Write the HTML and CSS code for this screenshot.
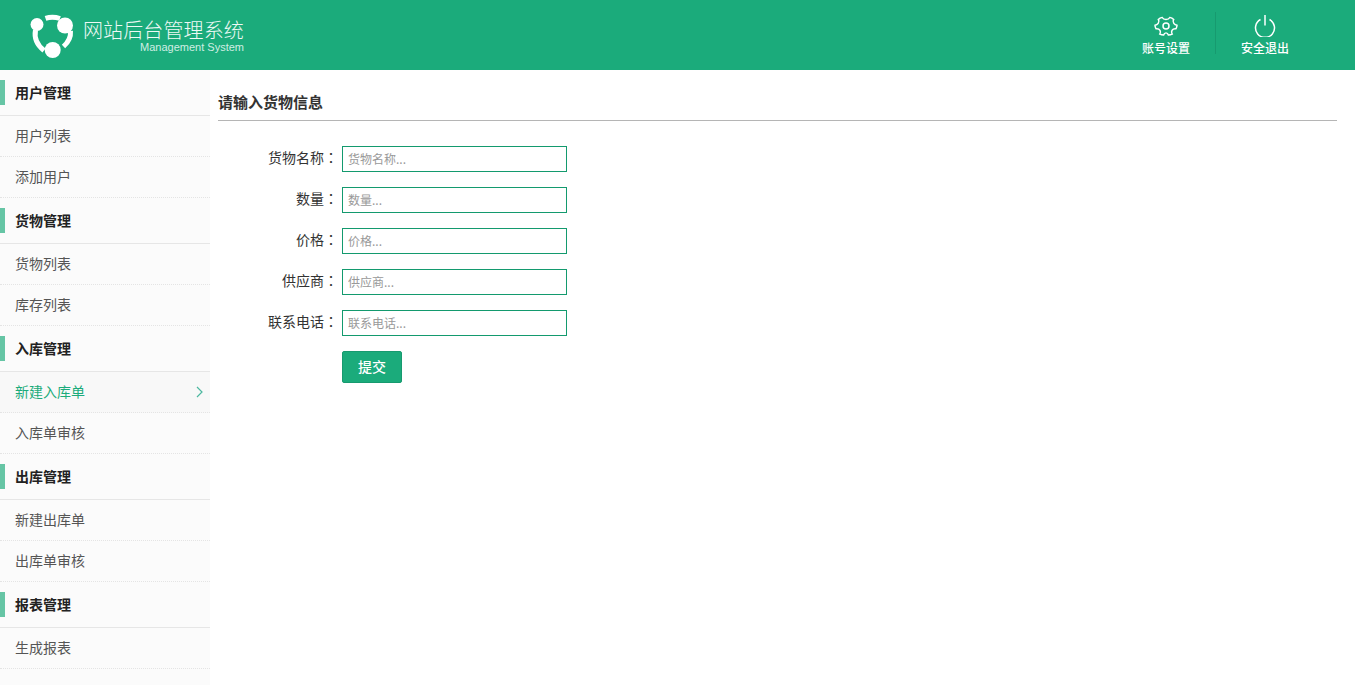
FILE: index.html
```html
<!DOCTYPE html>
<html lang="zh-CN">
<head>
<meta charset="utf-8">
<title>网站后台管理系统</title>
<link rel="stylesheet" href="styles.css">
</head>
<body>
<header class="topbar">
  <div class="brand">
    <svg class="brand-logo" width="46" height="46" viewBox="0 0 46 46">
      <g fill="none" stroke="#fff" stroke-width="5">
        <path d="M16.500 6.300C21 4.800 26 4.800 31 6.500"/>
        <path d="M6.500 18C5 26 8 33 15 38.500"/>
        <path d="M41.500 19C42 25 39 30.500 34.500 34.500"/>
      </g>
      <g fill="#fff">
        <circle cx="8" cy="12.500" r="6.500"/>
        <circle cx="36" cy="13.500" r="8"/>
        <circle cx="23.700" cy="38" r="8"/>
      </g>
    </svg>
    <div class="brand-text">
      <div class="brand-title">网站后台管理系统</div>
      <div class="brand-sub">Management System</div>
    </div>
  </div>
  <nav class="top-actions">
    <a class="action action-settings">
      <svg width="24" height="22" viewBox="0 0 24 22" fill="none" stroke="#fff" stroke-width="1.500">
        <g transform="translate(0 1.100) scale(1 .9)">
          <path d="M8.200 1.500C9 3.200 10.300 3.800 12 3.800S15 3.200 15.800 1.500C17.300 1.800 18.700 2.600 19.700 3.700C18.800 5.200 18.900 6.700 19.800 8S21.600 9.900 23 10.200C23 11.500 22.600 13 21.900 14.100C20.200 13.900 18.800 14.500 18 15.900C17.300 17.300 17.300 18.600 18.200 20C17 20.700 15.300 21 14.400 21C14 19.600 13.200 18.600 12 18.600S10 19.600 9.600 21C8.200 21 6.900 20.600 5.800 20C6.700 18.600 6.700 17.300 6 15.900C5.200 14.500 3.800 13.900 2.100 14.100C1.400 13 1 11.500 1 10.200C2.400 9.900 3.300 9.300 4.200 8S5.200 5.200 4.300 3.700C5.300 2.600 6.700 1.800 8.200 1.500Z"/>
        </g>
        <circle cx="12" cy="11" r="3"/>
      </svg>
      <span>账号设置</span>
    </a>
    <a class="action action-divided">
      <svg width="24" height="22" viewBox="0 0 24 22" fill="none" stroke="#fff" stroke-width="1.500">
        <path d="M7.500 4.500A9.500 9.500 0 1 0 16.500 4.500"/>
        <path d="M12 0V10.500"/>
      </svg>
      <span>安全退出</span>
    </a>
  </nav>
</header>
<div class="layout">
  <aside class="sidebar">
    <section>
      <h3 class="menu-head"><i class="marker"></i>用户管理</h3>
      <a class="menu-item">用户列表</a>
      <a class="menu-item">添加用户</a>
    </section>
    <section>
      <h3 class="menu-head"><i class="marker"></i>货物管理</h3>
      <a class="menu-item">货物列表</a>
      <a class="menu-item">库存列表</a>
    </section>
    <section>
      <h3 class="menu-head"><i class="marker"></i>入库管理</h3>
      <a class="menu-item active">新建入库单
        <svg class="chevron" width="7" height="12" viewBox="0 0 7 12" fill="none" stroke="#4cb8a0" stroke-width="1.200"><path d="M1 1L6 6L1 11"/></svg>
      </a>
      <a class="menu-item">入库单审核</a>
    </section>
    <section>
      <h3 class="menu-head"><i class="marker"></i>出库管理</h3>
      <a class="menu-item">新建出库单</a>
      <a class="menu-item">出库单审核</a>
    </section>
    <section>
      <h3 class="menu-head"><i class="marker"></i>报表管理</h3>
      <a class="menu-item">生成报表</a>
    </section>
  </aside>
  <main class="content">
    <h2 class="page-title">请输入货物信息</h2>
    <form class="entry-form">
      <label class="field"><span class="field-label">货物名称<span class="colon" lang="zh-TW">：</span></span><input class="field-input" placeholder="货物名称..."></label>
      <label class="field"><span class="field-label">数量<span class="colon" lang="zh-TW">：</span></span><input class="field-input" placeholder="数量..."></label>
      <label class="field"><span class="field-label">价格<span class="colon" lang="zh-TW">：</span></span><input class="field-input" placeholder="价格..."></label>
      <label class="field"><span class="field-label">供应商<span class="colon" lang="zh-TW">：</span></span><input class="field-input" placeholder="供应商..."></label>
      <label class="field"><span class="field-label">联系电话<span class="colon" lang="zh-TW">：</span></span><input class="field-input" placeholder="联系电话..."></label>
      <button class="submit" type="button">提交</button>
    </form>
  </main>
</div>
</body>
</html>
```

FILE: styles.css
```css
* { box-sizing: border-box; }
html, body { height: 100%; }
body {
  margin: 0;
  display: flex;
  flex-direction: column;
  overflow: hidden;
  background: #fff;
  color: #333;
  font: 14px/20px "Noto Sans CJK SC", "Liberation Sans", sans-serif;
}
.topbar {
  flex: none;
  height: 70px;
  display: flex;
  justify-content: space-between;
  background: #1bab7b;
  color: #fff;
}
.brand {
  display: flex;
  align-items: center;
  padding-left: 29px;
  gap: 8px;
}
.brand-logo { margin-top: -1px; overflow: visible; }
.brand-text { display: flex; flex-direction: column; }
.brand-title {
  padding-top: 5px;
  font-family: "Liberation Sans", "Noto Sans CJK SC", sans-serif;
  font-size: 20px;
  line-height: 19px;
  font-weight: 300;
  letter-spacing: .12px;
  color: #eef9f5;
}
.brand-sub {
  font-family: "Liberation Sans", sans-serif;
  font-size: 11px;
  line-height: 12px;
  text-align: right;
  color: #cfeee3;
}
.top-actions {
  display: flex;
  align-items: center;
  padding-right: 40px;
}
.action {
  width: 100px;
  height: 42px;
  margin-top: -4px;
  padding-top: 3px;
  display: flex;
  flex-direction: column;
  align-items: center;
  gap: 2px;
  font-size: 12px;
  line-height: 18px;
  font-weight: 500;
}
.action svg { flex: none; }
.action span { flex: none; }
.action-settings { padding-left: 2px; }
.action-divided {
  padding-right: 1px;
  border-left: 1px solid #179a6f;
}
.layout {
  flex: 1;
  display: flex;
  min-height: 0;
}
.sidebar {
  flex: none;
  width: 210px;
  background: #fbfbfb;
}
.menu-head {
  height: 46px;
  margin: 0;
  padding: 10px 0 0 0;
  display: flex;
  align-items: flex-start;
  font-size: 14px;
  line-height: 25px;
  font-weight: 700;
  color: #222;
  border-bottom: 1px solid #e6e6e6;
}
.marker {
  width: 5px;
  height: 25px;
  margin-right: 10px;
  background: #66c5a5;
}
.menu-item {
  position: relative;
  display: block;
  height: 41px;
  padding: 9px 0 0 15px;
  font-size: 14px;
  color: #555;
  border-bottom: 1px dotted #e4e4e4;
}
.menu-item.active {
  background: #f8f8f8;
  color: #1bab7b;
}
.chevron {
  position: absolute;
  right: 7px;
  top: 14px;
}
.content {
  flex: 1;
  padding: 20px 18px 0 8px;
}
.page-title {
  height: 31px;
  margin: 0 0 25px;
  font-size: 15px;
  line-height: 24px;
  font-weight: 700;
  color: #333;
  border-bottom: 1px solid #b5b5b5;
}
.entry-form {
  display: flex;
  flex-direction: column;
  align-items: flex-start;
  gap: 15px;
}
.field {
  display: flex;
  align-items: center;
}
.field-label {
  width: 124px;
  padding-right: 4px;
  margin-top: -4px;
  text-align: right;
  white-space: nowrap;
}
.colon { font-family: "Noto Sans CJK TC", sans-serif; }
.field-input {
  width: 225px;
  height: 26px;
  padding: 0 5px 2px;
  border: 1px solid #139a6e;
  outline: 0;
  background: #fff;
  font: 12px "Noto Sans CJK SC", sans-serif;
}
.field-input::placeholder { color: #999; opacity: 1; }
.submit {
  width: 60px;
  height: 32px;
  margin-left: 124px;
  padding: 0 0 2px;
  background: #1bab7b;
  border: 1px solid #179a6f;
  border-radius: 2px;
  color: #fff;
  font: 500 14px "Noto Sans CJK SC", sans-serif;
}
```
